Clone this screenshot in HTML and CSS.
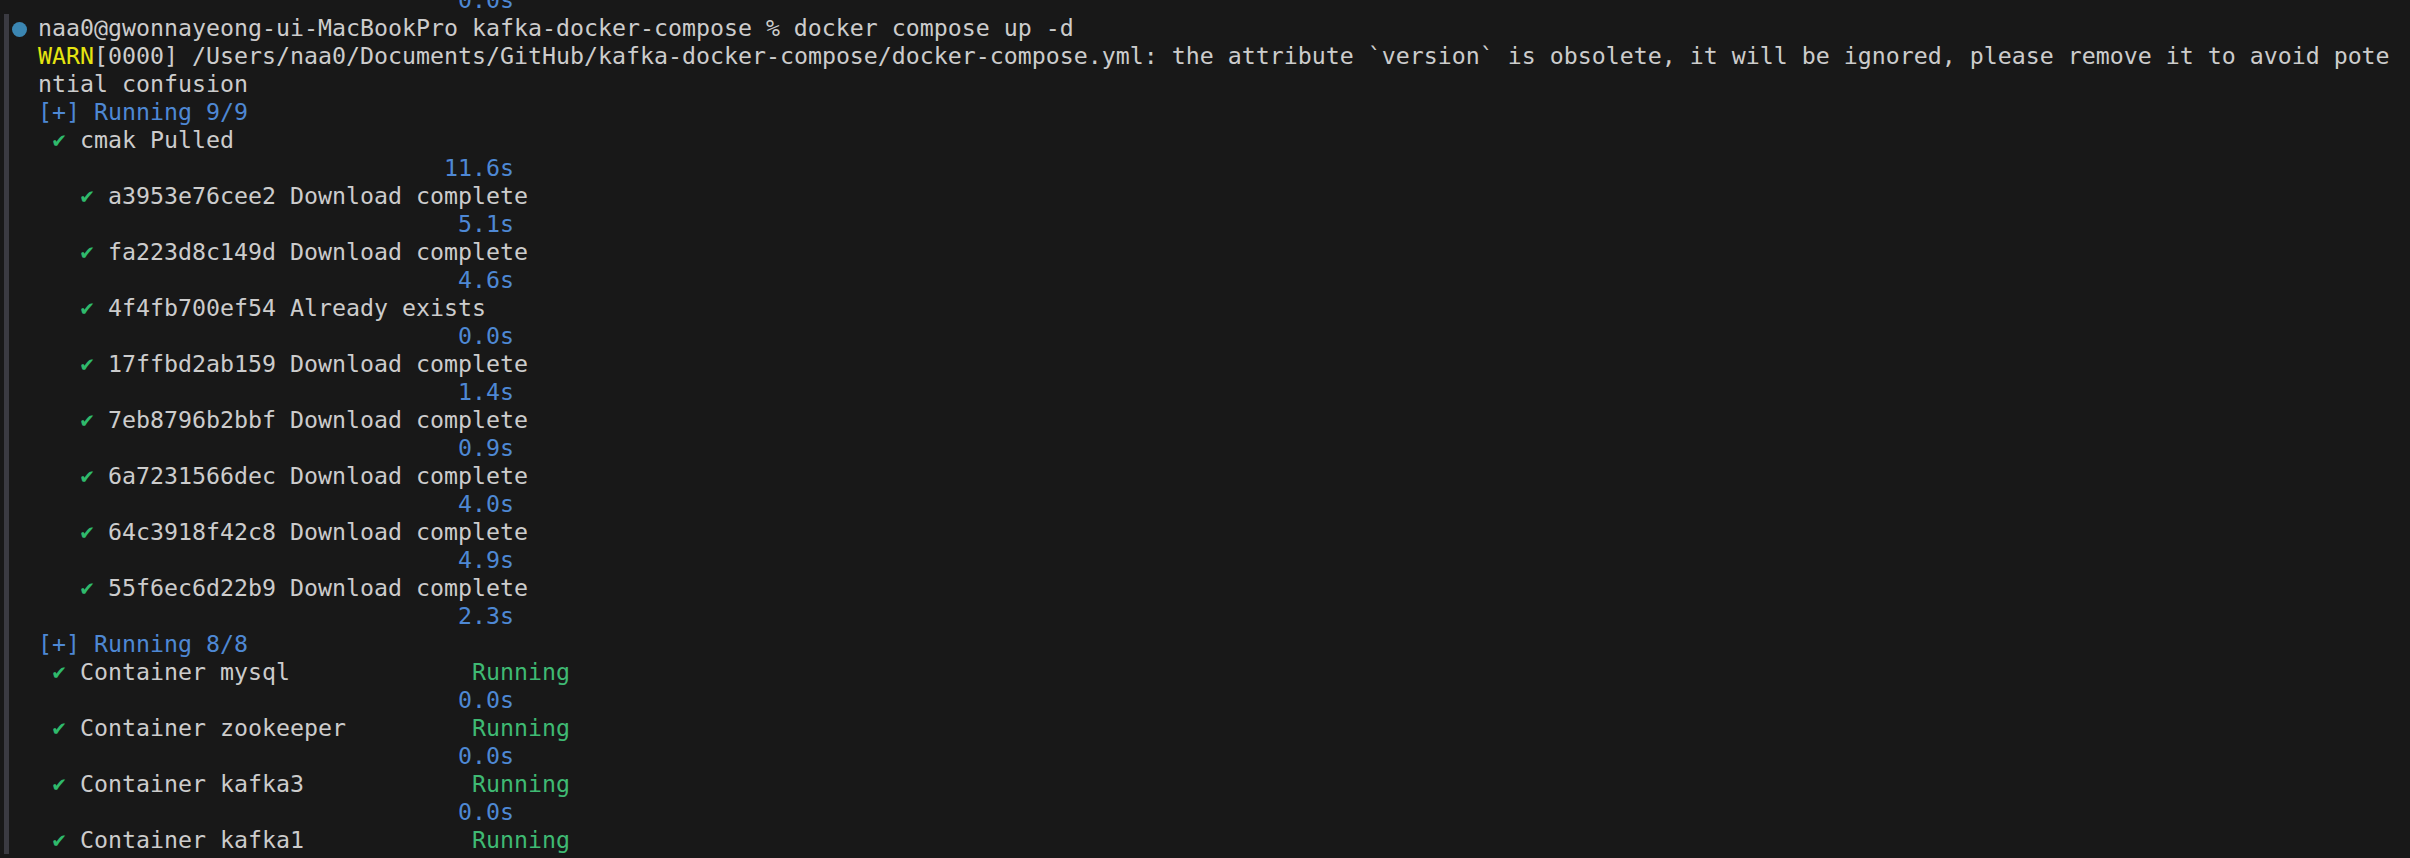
FILE: index.html
```html
<!DOCTYPE html>
<html lang="en">
<head>
<meta charset="utf-8">
<title>Terminal</title>
<link rel="stylesheet" href="styles.css">
</head>
<body>
<div class="term">
<div class="line"><span class="blue">                              0.0s</span></div>
<div class="cmd">
<div class="line"><span class="dot"></span>naa0@gwonnayeong-ui-MacBookPro kafka-docker-compose % docker compose up -d</div>
<div class="line"><span class="yellow">WARN</span>[0000] /Users/naa0/Documents/GitHub/kafka-docker-compose/docker-compose.yml: the attribute `version` is obsolete, it will be ignored, please remove it to avoid pote</div>
<div class="line">ntial confusion</div>
<div class="line blue">[+] Running 9/9</div>
<div class="line"> <span class="ok">✔</span> cmak Pulled</div>
<div class="line blue">                             11.6s</div>
<div class="line">   <span class="ok">✔</span> a3953e76cee2 Download complete</div>
<div class="line blue">                              5.1s</div>
<div class="line">   <span class="ok">✔</span> fa223d8c149d Download complete</div>
<div class="line blue">                              4.6s</div>
<div class="line">   <span class="ok">✔</span> 4f4fb700ef54 Already exists</div>
<div class="line blue">                              0.0s</div>
<div class="line">   <span class="ok">✔</span> 17ffbd2ab159 Download complete</div>
<div class="line blue">                              1.4s</div>
<div class="line">   <span class="ok">✔</span> 7eb8796b2bbf Download complete</div>
<div class="line blue">                              0.9s</div>
<div class="line">   <span class="ok">✔</span> 6a7231566dec Download complete</div>
<div class="line blue">                              4.0s</div>
<div class="line">   <span class="ok">✔</span> 64c3918f42c8 Download complete</div>
<div class="line blue">                              4.9s</div>
<div class="line">   <span class="ok">✔</span> 55f6ec6d22b9 Download complete</div>
<div class="line blue">                              2.3s</div>
<div class="line blue">[+] Running 8/8</div>
<div class="line"> <span class="ok">✔</span> Container mysql             <span class="green">Running</span></div>
<div class="line blue">                              0.0s</div>
<div class="line"> <span class="ok">✔</span> Container zookeeper         <span class="green">Running</span></div>
<div class="line blue">                              0.0s</div>
<div class="line"> <span class="ok">✔</span> Container kafka3            <span class="green">Running</span></div>
<div class="line blue">                              0.0s</div>
<div class="line"> <span class="ok">✔</span> Container kafka1            <span class="green">Running</span></div>
</div>
</div>
</body>
</html>
```
FILE: styles.css
```css
html, body {
  margin: 0;
  padding: 0;
  background: #181818;
  overflow: hidden;
}
.term {
  margin-top: -14px;
  padding-left: 38px;
  font-family: "DejaVu Sans Mono", "Liberation Mono", monospace;
  font-size: 23.25px;
  line-height: 28px;
  color: #cccccc;
}
.line {
  white-space: pre;
  height: 28px;
}
.cmd {
  margin-left: -34px;
  border-left: 5px solid #3b3b42;
  padding-left: 29px;
}
.dot {
  display: inline-block;
  width: 15px;
  height: 15px;
  border-radius: 50%;
  background: #3b86b2;
  margin-left: -26px;
  margin-right: 11px;
  vertical-align: -1px;
}
.yellow { color: #e5e510; }
.blue { color: #4e88d4; }
.green { color: #3fba73; }
.ok {
  display: inline-block;
  width: 14px;
  text-align: center;
  color: #2fba6c;
  font-size: 22px;
  font-weight: bold;
  vertical-align: top;
}
```
